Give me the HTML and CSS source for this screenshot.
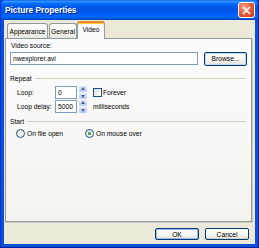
FILE: index.html
```html
<!DOCTYPE html>
<html>
<head>
<meta charset="utf-8">
<link rel="stylesheet" href="styles.css">
</head>
<body>
<div class="window">
  <div class="titlebar">
    <span class="title">Picture Properties</span>
    <span class="close"><svg width="9" height="9" viewBox="0 0 9 9"><path d="M1 1L8 8M8 1L1 8" stroke="#fff" stroke-width="1.6"/></svg></span>
  </div>
  <div class="client">
    <div class="tabs">
      <div class="tab">Appearance</div>
      <div class="tab">General</div>
      <div class="tab active">Video</div>
    </div>
    <div class="panel">
      <div class="label">Video source:</div>
      <div class="source-row">
        <div class="input wide">nwexplorer.avi</div>
        <div class="btn browse">Browse...</div>
      </div>
      <div class="group"><span>Repeat</span><i></i></div>
      <div class="field-row">
        <span class="flabel">Loop:</span>
        <div class="input small">0</div>
        <div class="spin"><b class="up"></b><b class="down"></b></div>
        <span class="check"></span><span>Forever</span>
      </div>
      <div class="field-row">
        <span class="flabel">Loop delay:</span>
        <div class="input small">5000</div>
        <div class="spin"><b class="up"></b><b class="down"></b></div>
        <span class="unit">milliseconds</span>
      </div>
      <div class="group start"><span>Start</span><i></i></div>
      <div class="radio-row">
        <span class="radio"></span><span class="rlabel">On file open</span>
        <span class="radio on"></span><span>On mouse over</span>
      </div>
    </div>
    <div class="buttons">
      <div class="btn ok">OK</div>
      <div class="btn">Cancel</div>
    </div>
  </div>
</div>
</body>
</html>
```
FILE: styles.css
```css
* { box-sizing: border-box; }
html, body { margin: 0; padding: 0; }
body { width: 259px; height: 248px; overflow: hidden; font-family: "Liberation Sans", Arial, sans-serif; font-size: 6.7px; color: #000; }
.window {
  width: 259px; height: 248px;
  background: #0a4fd6;
  border-left: 1px solid #0831d9; border-right: 1px solid #001ea0; border-bottom: 1px solid #001ea0;
  display: flex; flex-direction: column;
}
.titlebar {
  height: 20px; flex: none;
  display: flex; align-items: center; justify-content: space-between;
  padding: 0 3px 0 4px;
  background: linear-gradient(#0058ee 0%, #3d95ff 6%, #1a82ff 12%, #0670fc 18%, #0262ee 26%, #0057e5 36%, #0055eb 60%, #005bf5 70%, #026afe 80%, #0062ef 88%, #0052d6 94%, #0040ab 100%);
  border-radius: 5px 5px 0 0;
}
.title { color: #fff; font-weight: bold; font-size: 8.3px; text-shadow: 1px 1px 0 #0a2a88; }
.close {
  width: 17px; height: 16px; border: 1px solid #fff; border-radius: 3px;
  background: radial-gradient(circle at 35% 30%, #f6a48a 0%, #e8684a 40%, #d4441f 75%, #c03010 100%);
  display: flex; align-items: center; justify-content: center;
}
.client {
  flex: 1; margin: 0 3px 3px 3px; background: #ece9d8;
  display: flex; flex-direction: column; padding: 1px 3px 0 1px;
}
.tabs { display: flex; height: 17px; padding-left: 2px; align-items: flex-end; position: relative; z-index: 1; }
.tab {
  height: 15px; padding: 0 3px; margin-right: 1px;
  border: 1px solid #919b9c; border-bottom: none; border-radius: 3px 3px 0 0;
  background: linear-gradient(#fefefe, #f4f3ee 60%, #e6e5de);
  display: flex; align-items: center; justify-content: center;
}
.tab:nth-child(1) { width: 41px; }
.tab:nth-child(2) { width: 28px; }
.tab.active {
  width: 28px; height: 18px; margin-bottom: -1px; margin-left: -1px;
  background: #fcfcfe; border-top: 2px solid #e68b2c;
  box-shadow: inset 0 1px 0 #ffc73c;
  align-items: flex-start; padding-top: 3px;
}
.panel {
  height: 184px; flex: none;
  border: 1px solid #919b9c;
  background: linear-gradient(#fcfcfe, #f4f3ee);
  padding: 3px 4px 0 4px;
  display: flex; flex-direction: column;
  box-shadow: 1px 1px 0 #d0cec3;
}
.label { height: 7px; line-height: 7px; margin-left: 1px; }
.source-row { display: flex; align-items: center; margin-top: 2px; height: 15px; }
.input {
  height: 13px; border: 1px solid #7f9db9; background: #fff;
  padding: 0 2px; line-height: 11px; display: flex; align-items: center;
}
.input.wide { width: 188px; }
.btn {
  width: 40px; height: 13px; border: 1px solid #003c74; border-radius: 2px;
  background: linear-gradient(#fff, #f4f4f0 60%, #e3e2da);
  display: flex; align-items: center; justify-content: center;
  box-shadow: inset 0 -1px 0 #d6d0c5;
}
.btn.browse { margin-left: 6px; width: 43px; height: 14px; box-shadow: inset 0 0 0 1px #c5d5f5, inset 0 -1px 0 #d6d0c5; }
.group { display: flex; align-items: center; height: 8px; margin-top: 8px; }
.group i { flex: 1; height: 1px; background: #d0d0bf; margin-left: 3px; margin-right: 1px; }
.group.start { margin-top: 4px; }
.field-row { display: flex; align-items: center; height: 13px; margin-left: 7px; }
.group + .field-row { margin-top: 4px; }
.field-row + .field-row { margin-top: 1px; }
.flabel { width: 38px; }
.input.small { width: 22px; }
.spin { width: 8px; height: 13px; margin-left: 2px; display: flex; flex-direction: column; gap: 1px; }
.spin b {
  flex: 1; background: linear-gradient(#dde8fd, #b9cdf7); border-radius: 1px; position: relative;
}
.spin b::after {
  content: ""; position: absolute; left: 1.5px; top: 1px;
  border-left: 2.5px solid transparent; border-right: 2.5px solid transparent;
}
.spin .up::after { border-bottom: 3px solid #4d6185; }
.spin .down::after { border-top: 3px solid #4d6185; top: 2px; }
.check { width: 9px; height: 9px; border: 1px solid #1c5180; background: linear-gradient(135deg, #dcdcd7, #fff); margin: 0 1px 0 6px; }
.unit { margin-left: 6px; }
.radio-row { display: flex; align-items: center; height: 11px; margin-top: 3px; margin-left: 6px; }
.radio { width: 9px; height: 9px; border-radius: 50%; border: 1px solid #1c5180; background: linear-gradient(135deg, #dcdcd7, #fff); margin-right: 2px; position: relative; }
.radio.on::after { content: ""; position: absolute; left: 2px; top: 2px; width: 3px; height: 3px; border-radius: 50%; background: #21a121; }
.rlabel { width: 58px; }
.buttons { display: flex; justify-content: flex-end; gap: 6px; padding: 6px 3px 0 0; }
.buttons .btn { width: 44px; height: 12px; }
.btn.ok { box-shadow: inset 0 0 0 1px #98b8f0, inset 0 -1px 0 #6f9af0; }
```
